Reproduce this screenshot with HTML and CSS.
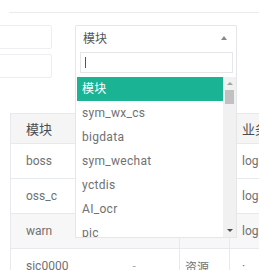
FILE: index.html
```html
<!DOCTYPE html>
<html lang="zh">
<head>
    <meta charset="UTF-8">
    <title>模块列表</title>
    <link rel="stylesheet" href="styles.css">
</head>
<body>
    <div class="page">
        <div class="toolbar-line"></div>

        <!-- 查询条件 -->
        <div class="filters">
            <div class="filter-col">
                <input type="text" class="form-control">
                <input type="text" class="form-control">
            </div>
            <div class="chosen-container chosen-with-drop">
                <a class="chosen-single"><span>模块</span><b class="arrow"></b></a>
                <div class="chosen-drop">
                    <div class="chosen-search"><input type="text"><i class="caret-line"></i></div>
                    <div class="results-wrap">
                        <ul class="chosen-results">
                            <li class="highlighted">模块</li>
                            <li>sym_wx_cs</li>
                            <li>bigdata</li>
                            <li>sym_wechat</li>
                            <li>yctdis</li>
                            <li>AI_ocr</li>
                            <li>pic</li>
                            <li>sic0000</li>
                        </ul>
                        <div class="scrollbar">
                            <span class="sb-btn sb-up"></span>
                            <span class="sb-thumb"></span>
                            <span class="sb-fill"></span>
                            <span class="sb-btn sb-down"></span>
                        </div>
                    </div>
                </div>
            </div>
        </div>

        <!-- 列表 -->
        <table class="data-table">
            <thead>
                <tr>
                    <th class="col-mod">模块</th>
                    <th class="col-a"></th>
                    <th class="col-b"></th>
                    <th class="col-c">业务</th>
                </tr>
            </thead>
            <tbody>
                <tr><td>boss</td><td></td><td></td><td>log</td></tr>
                <tr><td>oss_c</td><td></td><td></td><td>log</td></tr>
                <tr class="hover"><td>warn</td><td></td><td></td><td>log</td></tr>
                <tr><td>sic0000</td><td class="dim">-</td><td>资源</td><td>·</td></tr>
            </tbody>
        </table>
    </div>
</body>
</html>
```

FILE: styles.css
```css
body {
    font-family: Roboto, "Noto Sans CJK SC", sans-serif;
    font-size: 12px;
    color: #6f7173;
    background: #fff;
    margin: 0;
    padding: 0;
}
.page {
    width: 259px;
    height: 270px;
    overflow: hidden;
}
.toolbar-line {
    margin: 12px 0 0 9px;
    border-top: 1px solid #e9ebed;
}
.filters {
    display: flex;
    gap: 23px;
    margin: 12px 0 0 -60px;
}
.filter-col {
    display: flex;
    flex-direction: column;
    gap: 5px;
    width: 112px;
}
.form-control {
    box-sizing: border-box;
    width: 112px;
    height: 24px;
    margin: 0;
    border: 1px solid #eceef0;
    border-radius: 2px;
}
.chosen-container {
    position: relative;
    width: 162px;
    height: 24px;
}
.chosen-single {
    box-sizing: border-box;
    display: flex;
    align-items: center;
    height: 24px;
    padding: 0 7px;
    border: 1px solid #e5e6e7;
    border-bottom: none;
    border-radius: 2px 2px 0 0;
    color: #555;
    font-size: 12px;
}
.chosen-single span {
    flex: 1;
}
.chosen-single .arrow {
    width: 0;
    height: 0;
    margin-right: 2px;
    border-left: 3px solid transparent;
    border-right: 3px solid transparent;
    border-bottom: 4px solid #888;
}
.chosen-drop {
    position: absolute;
    top: 100%;
    left: 0;
    z-index: 10;
    box-sizing: border-box;
    width: 162px;
    background: #fff;
    border: 1px solid #e5e6e7;
    border-top: none;
}
.chosen-search {
    position: relative;
    padding: 3px 3px 4px 4px;
}
.chosen-search input {
    box-sizing: border-box;
    display: block;
    width: 153px;
    height: 21px;
    margin: 0;
    border: 1px solid #e5e6e7;
    outline: none;
}
.caret-line {
    position: absolute;
    left: 9px;
    top: 8px;
    width: 1px;
    height: 11px;
    background: #555;
}
.results-wrap {
    display: flex;
    height: 160px;
    padding-left: 1px;
}
.chosen-results {
    flex: 1;
    margin: 0;
    padding: 0;
    list-style: none;
    overflow: hidden;
}
.chosen-results li {
    padding: 5px 6px 5px 5px;
    line-height: 14px;
    color: #6f7173;
    letter-spacing: 0.3px;
}
.chosen-results li.highlighted {
    background: #1ab394;
    color: #fff;
}
.scrollbar {
    display: flex;
    flex-direction: column;
    width: 13px;
    background: #f1f1f1;
}
.sb-btn {
    height: 13px;
    display: flex;
    align-items: center;
    justify-content: center;
}
.sb-up::before,
.sb-down::before {
    content: "";
    width: 0;
    height: 0;
    border-left: 3px solid transparent;
    border-right: 3px solid transparent;
}
.sb-up::before {
    border-bottom: 3px solid #a3a3a3;
}
.sb-down::before {
    border-top: 3px solid #505050;
}
.sb-thumb {
    height: 14px;
    margin: 0 2px;
    background: #c1c1c1;
}
.sb-fill {
    flex: 1;
}
.data-table {
    width: 299px;
    margin: 35px 0 0 10px;
    border-collapse: collapse;
    table-layout: fixed;
}
.data-table th,
.data-table td {
    box-sizing: border-box;
    padding: 0 8px;
    text-align: left;
    white-space: nowrap;
    overflow: hidden;
    border-bottom: 1px solid #e7eaec;
}
.data-table th {
    height: 30px;
    background: #f5f5f6;
    border-top: 1px solid #e7eaec;
    color: #4a4c4e;
    font-weight: normal;
    font-size: 13px;
}
.data-table td {
    height: 35px;
}
.data-table th:first-child,
.data-table td:first-child {
    padding-left: 15px;
    border-left: 1px solid #e7eaec;
}
.data-table th:nth-child(3),
.data-table td:nth-child(3),
.data-table th:nth-child(4),
.data-table td:nth-child(4) {
    border-left: 1px solid #e7eaec;
}
.data-table td:nth-child(3) {
    padding-left: 5px;
}
.data-table th:nth-child(4),
.data-table td:nth-child(4) {
    padding-left: 12px;
}
.col-mod { width: 107px; }
.col-a { width: 62px; }
.col-b { width: 50px; }
.col-c { width: 80px; }
.data-table tr.hover td {
    background: #f7f7f7;
}
.data-table td.dim {
    padding-left: 15px;
    color: #aaa;
}
```
